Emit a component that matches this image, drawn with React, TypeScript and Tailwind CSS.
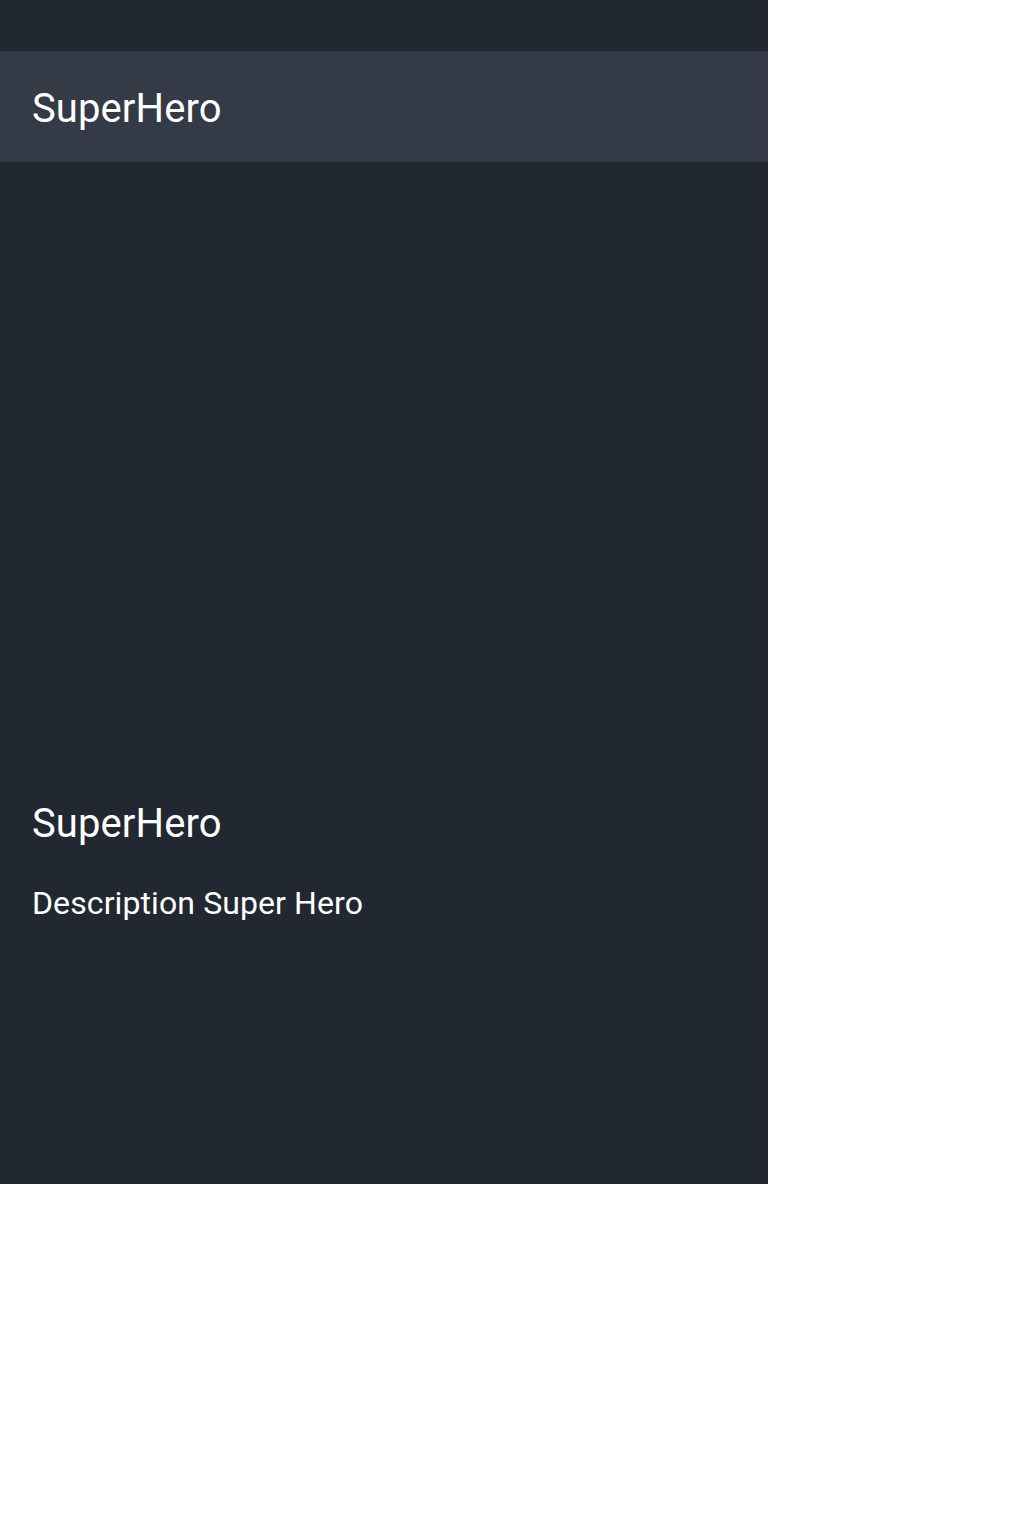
export default function App() {
  return (
    <div className="w-[768px] h-[1184px] bg-[#222831] flex flex-col" style={{ fontFamily: 'Roboto, "Noto Sans", sans-serif' }}>
      <div className="h-[51px]" />
      <div className="h-[111px] bg-[#343a46] flex items-center px-8 pt-[5px]">
        <span className="text-[40px] text-white leading-[48px] tracking-[0.1px]">SuperHero</span>
      </div>
      <div className="flex-1 flex flex-col px-8 pt-[638px]">
        <div className="text-[40px] text-white leading-[48px] tracking-[0.1px]">SuperHero</div>
        <div className="mt-[37px] text-[32px] text-white leading-[36px] tracking-[0.1px]">Description Super Hero</div>
      </div>
    </div>
  );
}
